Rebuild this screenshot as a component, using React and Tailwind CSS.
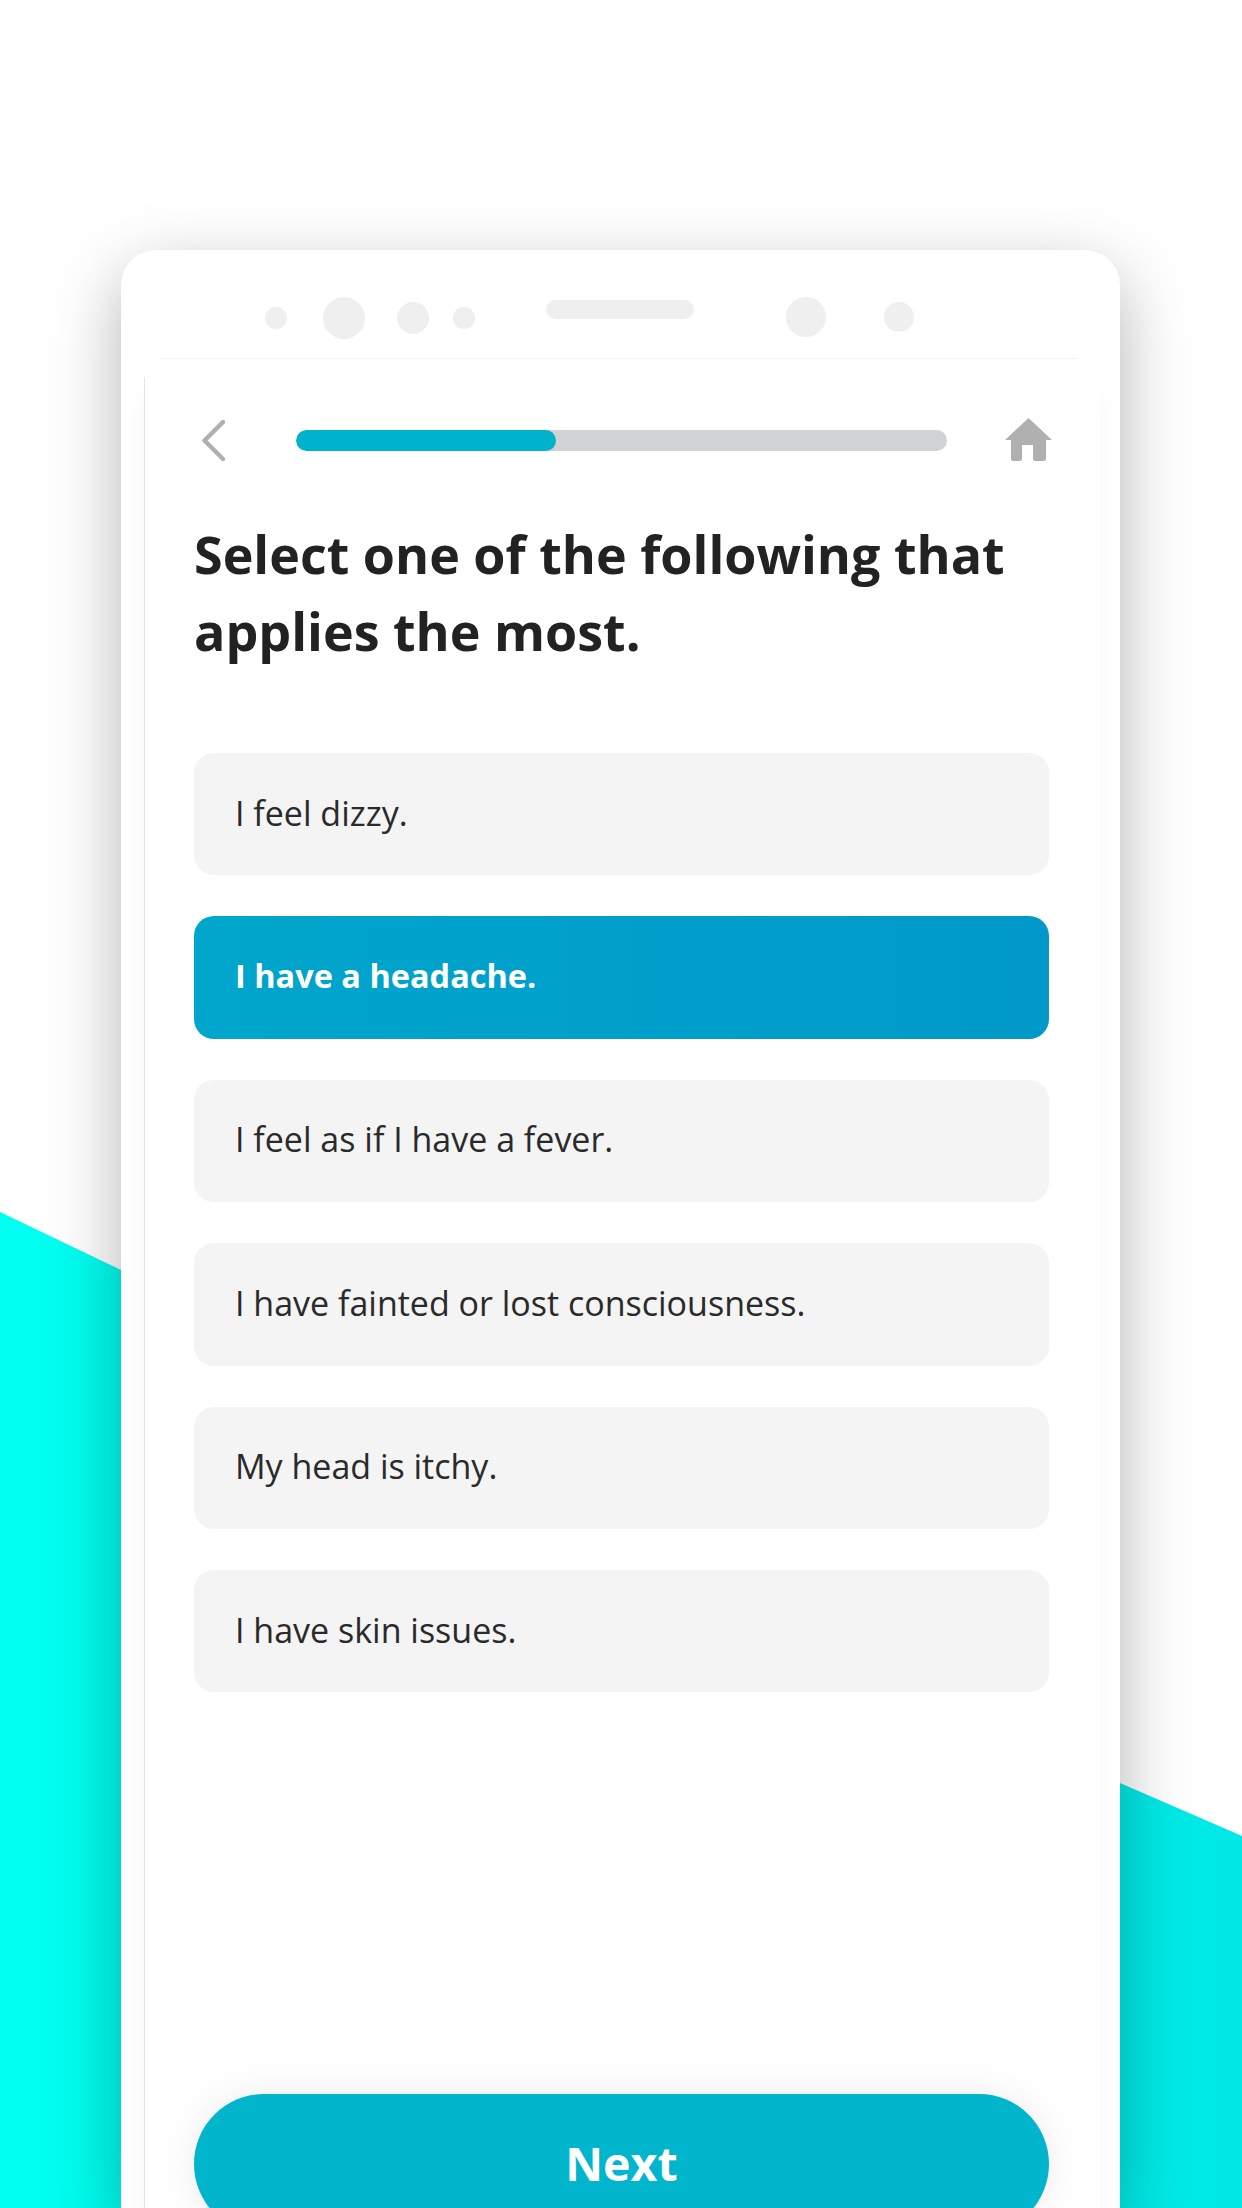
const options = [
  'I feel dizzy.',
  'I have a headache.',
  'I feel as if I have a fever.',
  'I have fainted or lost consciousness.',
  'My head is itchy.',
  'I have skin issues.',
];

export default function App() {
  return (
    <div className="relative w-[1242px] h-[2208px] overflow-hidden bg-white font-['Open_Sans','Noto_Sans',sans-serif]">
      {/* Teal background band */}
      <div className="absolute inset-0 bg-gradient-to-r from-[#00fff0] to-[#00e9e6] [clip-path:polygon(0_1212px,121px_1270px,1120px_1783px,1242px_1836px,1242px_2208px,0_2208px)]" />

      {/* Phone card */}
      <div className="relative mt-[250px] ml-[121px] w-[999px] h-[1958px] flex flex-col bg-white rounded-t-[35px] shadow-[0_24px_70px_rgba(0,0,0,0.3)]">
        {/* Speaker and sensors */}
        <div className="h-[108px] shrink-0 flex items-center pt-[28px]">
          <div className="ml-[144px] w-[22px] h-[22px] rounded-full bg-[#efefef]" />
          <div className="ml-[36px] w-[42px] h-[42px] rounded-full bg-[#efefef]" />
          <div className="ml-[32px] w-[32px] h-[32px] rounded-full bg-[#efefef]" />
          <div className="ml-[24px] w-[22px] h-[22px] rounded-full bg-[#efefef]" />
          <div className="ml-[71px] mb-[17px] w-[148px] h-[19px] rounded-full bg-[#efefef]" />
          <div className="ml-[92px] mb-[2px] w-[40px] h-[40px] rounded-full bg-[#efefef]" />
          <div className="ml-[58px] mb-[2px] w-[30px] h-[30px] rounded-full bg-[#efefef]" />
        </div>
        <div className="h-px shrink-0 ml-[39px] mr-[43px] bg-[#eef4f6]" />

        {/* Screen */}
        <div className="flex-1 mt-[18px] ml-[23px] mr-[20px] pl-[49px] pr-[51px] pt-[40px] border-l border-[#e4e4e4] shadow-[0_16px_24px_rgba(0,0,0,0.035)]">
          <div className="flex items-center h-[46px] -mr-[4px]">
            <svg className="ml-[8px] w-[23px] h-[41px]" viewBox="0 0 23 41" fill="none">
              <path d="M21 2 L2.500 20.500 L21 39" stroke="#b0b0b0" strokeWidth="4.500" strokeLinecap="round" strokeLinejoin="round" />
            </svg>
            <div className="ml-[71px] w-[651px] h-[21px] rounded-full bg-[#d1d2d4] overflow-hidden">
              <div className="w-[260px] h-full rounded-full bg-[#00b2cc]" />
            </div>
            <svg className="ml-[58px] w-[48px] h-[44px]" viewBox="0 0 48 44" fill="#b0b0b0">
              <path d="M23.500 0 L47 22 L41 22 L41 41 Q41 43 39 43 L30 43 Q28 43 28 41 L28 27 L17 27 L17 41 Q17 43 15 43 L8 43 Q6 43 6 41 L6 22 L0 22 Z" />
            </svg>
          </div>

          <h1 className="mt-[52px] text-[52px] leading-[77px] font-bold text-[#222222]">
            Select one of the following that
            <br />
            applies the most.
          </h1>

          <div className="mt-[84px] flex flex-col gap-[41px]">
            {options.map((label, i) => (
              <div
                key={label}
                className={
                  i === 1
                    ? 'h-[122.4px] flex items-center pl-[41px] pb-[2px] rounded-[20px] bg-gradient-to-r from-[#00a6cc] to-[#0099c9] text-[32.5px] font-bold text-white'
                    : 'h-[122.4px] flex items-center pl-[41px] pb-[2px] rounded-[20px] bg-[#f4f4f4] text-[34px] text-[#2a2a2a]'
                }
              >
                {label}
              </div>
            ))}
          </div>

          <button className="mt-[402px] w-[855px] h-[140px] rounded-full bg-[#01b5cd] text-[46.5px] font-bold text-white shadow-[0_0_40px_rgba(0,0,0,0.08)]">
            Next
          </button>
        </div>
      </div>
    </div>
  );
}
